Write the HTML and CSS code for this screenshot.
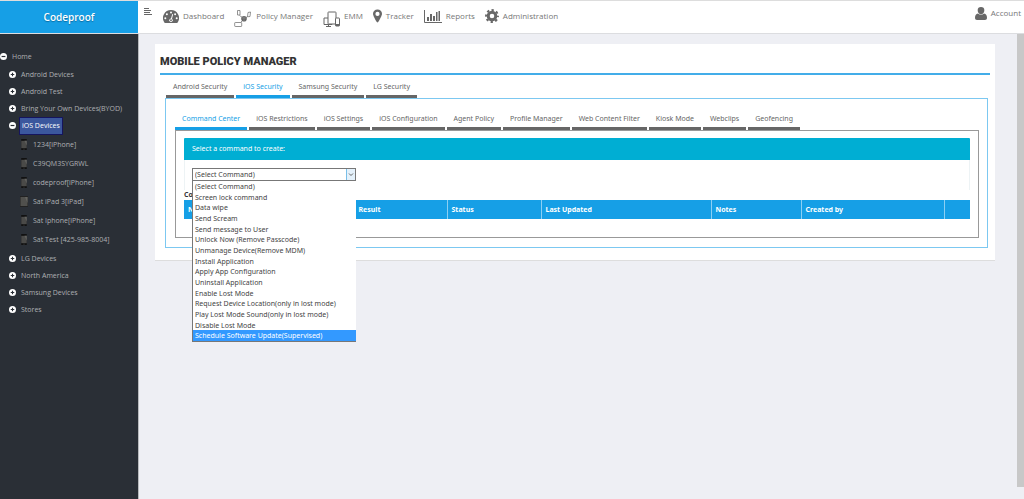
FILE: index.html
```html
<!DOCTYPE html>
<html lang="en">
<head>
<meta charset="utf-8">
<title>Codeproof</title>
<link rel="stylesheet" href="styles.css">
</head>
<body>
<svg class="defs" aria-hidden="true">
  <symbol id="plus" viewBox="0 0 14 14"><circle cx="7" cy="7" r="7" fill="#fff"/><path d="M7 3.500v7M3.500 7h7" stroke="#2a2f36" stroke-width="2.200"/></symbol>
  <symbol id="minus" viewBox="0 0 14 14"><circle cx="7" cy="7" r="7" fill="#fff"/><path d="M3.200 7h7.600" stroke="#2a2f36" stroke-width="2.400"/></symbol>
  <symbol id="phone" viewBox="0 0 6 12"><path fill="#111" d="M0 0h6v12H0z"/><path fill="#4a4a48" d="M0 2h6v8H0z"/><path fill="#62625f" d="M3.500 2H6v5z"/><path fill="#555" d="M2.500 10.700h1v.7h-1z"/></symbol>
  <symbol id="tablet" viewBox="0 0 8 11"><path fill="#222" d="M0 0h8v11H0z"/><path fill="#50504d" d="M.5 1h7v9h-7z"/><path fill="#646460" d="M5 1h2.500v6z"/></symbol>
</svg>
<header class="topbar">
  <a class="brand" href="#">Codeproof</a>
  <button class="toggle" aria-label="Toggle sidebar"><svg viewBox="0 0 8 7"><path d="M0 .5h5M0 2.500h7M0 4.500h6M0 6.500h8" stroke="#666"/></svg></button>
  <nav class="mainnav">
    <a href="#"><svg class="dash" viewBox="0 0 16 13"><path fill="#686868" d="M8 0a8 8 0 0 1 6.700 12.400l-.7.600H2l-.7-.6A8 8 0 0 1 8 0z"/><g fill="#fff"><circle cx="8" cy="2.500" r="1"/><circle cx="3.900" cy="4.200" r="1"/><circle cx="12.100" cy="4.200" r="1"/><circle cx="2.300" cy="8.200" r="1"/><circle cx="13.700" cy="8.200" r="1"/><circle cx="8" cy="10.200" r="1.700"/><path d="M9.300 4l.8.200-1.300 5.500-1.100-.3z"/></g><circle cx="8" cy="10.200" r=".9" fill="#686868"/></svg>Dashboard</a>
    <a href="#"><svg class="policy" viewBox="0 0 18 18"><g fill="#fff" stroke="#777" stroke-width=".8"><path d="M3.500 1.500H6v4.500H3.500z"/><path d="M14 3.500l2.500-.5-.5 4.500-2.500.3z"/><rect x=".7" y="13.500" width="7" height="4" rx=".6"/></g><path d="M5.500 6.500l3 2M13.500 7.500L11.500 9M7 13l2-2" stroke="#777" stroke-width=".8"/><circle cx="10" cy="9.800" r="2.800" fill="#666"/><path d="M8 9h4M10 7.500v4.500" stroke="#bbb" stroke-width=".3"/></svg>Policy Manager</a>
    <a href="#"><svg class="emm" viewBox="0 0 17 17"><g fill="#fff" stroke="#666"><path d="M1 7h8v6.500H1z"/><path d="M3 15.500h5M5.500 13.500v2"/><rect x="5" y="1" width="8" height="12" rx=".6"/><rect x="12.500" y="7" width="4" height="8" rx=".6"/></g><path d="M12.500 13h4v2h-4z" fill="#666"/></svg>EMM</a>
    <a href="#"><svg class="pin" viewBox="0 0 9 13"><path fill="#686868" fill-rule="evenodd" d="M4.500 0A4.400 4.400 0 0 1 9 4.500C9 6 6.500 10.500 5.200 12.600q-.7.800-1.400 0C2.500 10.500 0 6 0 4.500A4.400 4.400 0 0 1 4.500 0zm0 2.300a2.100 2.100 0 1 0 0 4.200 2.100 2.100 0 0 0 0-4.200z"/></svg>Tracker</a>
    <a href="#"><svg class="bars" viewBox="0 0 18 13"><path d="M.5 0v12.500H18" fill="none" stroke="#686868"/><path fill="#686868" d="M3 7h2v4H3zM6 4h2v7H6zM9 6h2v5H9zM12 2h1.500v9H12zM14.500 1H16v10h-1.500z"/></svg>Reports</a>
    <a href="#"><svg class="gear" viewBox="0 0 14 14"><circle cx="7" cy="7" r="3.800" fill="none" stroke="#686868" stroke-width="3"/><circle cx="7" cy="7" r="6" fill="none" stroke="#686868" stroke-width="1.900" stroke-dasharray="2.360 2.352" stroke-dashoffset="1.180"/></svg>Administration</a>
  </nav>
  <a class="account" href="#"><svg viewBox="0 0 12 13"><path fill="#686868" d="M6 0a3.300 3.300 0 0 1 3.300 3.500C9.300 5.500 8 7.200 6 7.200S2.700 5.500 2.700 3.500A3.300 3.300 0 0 1 6 0zM3 6.500q3 2.500 6 0c2.200.2 3 2 3 4.500 0 1.300-.8 2-2 2H2c-1.200 0-2-.7-2-2 0-2.500.8-4.300 3-4.500z"/></svg>Account</a>
</header>
<div class="body">
  <nav class="sidebar" aria-label="Devices">
    <ul class="tree">
      <li><a href="#"><svg><use href="#minus"/></svg><span>Home</span></a>
        <ul class="groups">
          <li><a href="#"><svg><use href="#plus"/></svg><span>Android Devices</span></a></li>
          <li><a href="#"><svg><use href="#plus"/></svg><span>Android Test</span></a></li>
          <li><a href="#"><svg><use href="#plus"/></svg><span>Bring Your Own Devices(BYOD)</span></a></li>
          <li><a href="#"><svg><use href="#minus"/></svg><span class="current">iOS Devices</span></a>
            <ul class="devices">
              <li><a href="#"><svg><use href="#phone"/></svg><span>1234[iPhone]</span></a></li>
              <li><a href="#"><svg><use href="#phone"/></svg><span>C39QM3SYGRWL</span></a></li>
              <li><a href="#"><svg><use href="#phone"/></svg><span>codeproof[iPhone]</span></a></li>
              <li><a href="#"><svg><use href="#tablet"/></svg><span>Sat iPad 3[iPad]</span></a></li>
              <li><a href="#"><svg><use href="#phone"/></svg><span>Sat Iphone[iPhone]</span></a></li>
              <li><a href="#"><svg><use href="#phone"/></svg><span>Sat Test [425-985-8004]</span></a></li>
            </ul>
          </li>
          <li><a href="#"><svg><use href="#plus"/></svg><span>LG Devices</span></a></li>
          <li><a href="#"><svg><use href="#plus"/></svg><span>North America</span></a></li>
          <li><a href="#"><svg><use href="#plus"/></svg><span>Samsung Devices</span></a></li>
          <li><a href="#"><svg><use href="#plus"/></svg><span>Stores</span></a></li>
        </ul>
      </li>
    </ul>
  </nav>
  <main class="content">
    <section class="card">
      <h1>MOBILE POLICY MANAGER</h1>
      <nav class="tabs">
        <a href="#">Android Security</a><a href="#" class="active">iOS Security</a><a href="#">Samsung Security</a><a href="#">LG Security</a>
      </nav>
      <div class="panel">
        <nav class="tabs">
          <a href="#" class="active">Command Center</a><a href="#">iOS Restrictions</a><a href="#">iOS Settings</a><a href="#">iOS Configuration</a><a href="#">Agent Policy</a><a href="#">Profile Manager</a><a href="#">Web Content Filter</a><a href="#">Kiosk Mode</a><a href="#">Webclips</a><a href="#">Geofencing</a>
        </nav>
        <div class="subpanel">
          <label class="prompt" for="command">Select a command to create:</label>
          <div class="create">
            <div class="picker">
              <select id="command"><option>(Select Command)</option></select>
              <svg class="arrow" viewBox="0 0 9 11" aria-hidden="true"><path d="M0 0h9v11H0z" fill="#e4f1fb"/><path d="M.5 0v11" stroke="#79bfe8"/><path d="M3 4.500l2 2 2-2" fill="none" stroke="#666"/></svg>
              <ul class="options" role="listbox" aria-label="Commands">
                <li role="option">(Select Command)</li>
                <li role="option">Screen lock command</li>
                <li role="option">Data wipe</li>
                <li role="option">Send Scream</li>
                <li role="option">Send message to User</li>
                <li role="option">Unlock Now (Remove Passcode)</li>
                <li role="option">Unmanage Device(Remove MDM)</li>
                <li role="option">Install Application</li>
                <li role="option">Apply App Configuration</li>
                <li role="option">Uninstall Application</li>
                <li role="option">Enable Lost Mode</li>
                <li role="option">Request Device Location(only in lost mode)</li>
                <li role="option">Play Lost Mode Sound(only in lost mode)</li>
                <li role="option">Disable Lost Mode</li>
                <li role="option" class="selected" aria-selected="true">Schedule Software Update(Supervised)</li>
              </ul>
            </div>
          </div>
          <h2>Co</h2>
          <table>
            <colgroup><col><col class="c-result"><col class="c-status"><col class="c-updated"><col class="c-notes"><col class="c-created"><col class="c-action"></colgroup>
            <thead><tr><th>N</th><th>Result</th><th>Status</th><th>Last Updated</th><th>Notes</th><th>Created by</th><th></th></tr></thead>
          </table>
        </div>
      </div>
    </section>
  </main>
  <div class="scrollbar"></div>
</div>
</body>
</html>
```
FILE: styles.css
```css
* { box-sizing: border-box; }
body {
  margin: 0;
  min-height: 100vh;
  display: flex;
  flex-direction: column;
  background: #eeeff4;
  color: #666;
  font: 7px/10px "Open Sans", sans-serif;
}
a { color: inherit; text-decoration: none; }
ul { list-style: none; margin: 0; padding: 0; }
svg { flex: none; display: block; }
.defs { display: none; }

.topbar {
  display: flex;
  height: 34px;
  background: #fff;
  border-top: 1px solid #ddd;
  border-bottom: 1px solid #dcdde0;
  color: #777;
  font-size: 8px;
}
.brand {
  width: 138px;
  display: grid;
  place-items: center;
  background: #169fe6;
  color: #fff;
  font-size: 10px;
  font-weight: 600;
  text-shadow: 0 1px 1px #0a6ea5;
}
.toggle {
  align-self: flex-start;
  margin: 7px 0 0 6px;
  padding: 0;
  border: 0;
  background: none;
}
.toggle svg { width: 8px; height: 7px; }
.mainnav { display: flex; gap: 10px; margin-left: 11px; height: 30px; }
.mainnav a { display: flex; align-items: center; gap: 4px; }
.dash { width: 16px; height: 13px; }
.policy { width: 18px; height: 18px; margin-top: 4px; }
.emm { width: 17px; height: 17px; margin-top: 6px; }
.pin { width: 9px; height: 14px; }
.bars { width: 18px; height: 13px; }
.gear { width: 14px; height: 14px; }
.account {
  margin: 0 3px 0 auto;
  height: 24px;
  display: flex;
  align-items: center;
  gap: 4px;
}
.account svg { width: 12px; height: 13px; }

.body { flex: 1; display: flex; }
.sidebar {
  width: 139px;
  flex: none;
  padding-top: 14px;
  background: #2a2f36;
  border-right: 1px solid #b8babd;
  color: #aeb0b3;
}
.tree a { display: flex; align-items: center; gap: 5px; height: 17px; white-space: nowrap; }
.tree svg { width: 7px; height: 7px; }
.groups { padding-top: 1px; }
.groups a { padding-left: 9px; }
.current {
  margin-left: -2px;
  padding: 3px 2px;
  background: #3b579d;
  border: 1px solid #15155e;
  color: #fff;
}
.devices { padding: 1px 0; }
.groups .devices a { height: 19px; padding-left: 20px; }
.tree .devices svg { width: 8px; height: 11px; }

.content { flex: 1; min-width: 0; padding: 10px 22px 0 16px; }
.card {
  background: #fff;
  padding: 10px 5px 12px;
  border-bottom: 1px solid #ddd;
  font-family: "Noto Sans", "Open Sans", sans-serif;
}
h1 {
  margin: 0;
  padding-bottom: 4px;
  border-bottom: 2px solid #43ade9;
  color: #333;
  font: 900 11px/15px Roboto, sans-serif;
}
.tabs { display: flex; gap: 2px; }
.card > .tabs { padding: 5px 0 0 6px; }
.tabs a {
  padding: 2px 7px 3px;
  border-bottom: 3px solid #666;
  white-space: nowrap;
}
.tabs .active { color: #169fe6; border-color: #169fe6; }
.panel {
  margin: 0 2px 0 5px;
  padding: 13px 8px 9px 9px;
  border: 1px solid #7cc8f1;
}
.subpanel {
  padding: 7px 8px 18px;
  border: 1px solid #999;
}
.prompt {
  display: block;
  padding: 6px 8px;
  background: #00aed3;
  color: #fff;
  border-radius: 1px 1px 0 0;
}
.create {
  padding: 8px 8px 9px 7px;
  border: 1px solid #edf3f5;
  border-width: 0 1px;
}
.picker { position: relative; width: 164px; }
select {
  display: block;
  appearance: none;
  width: 100%;
  height: 13px;
  padding: 0 2px;
  border: 1px solid #777;
  border-radius: 0;
  background: #fff;
  color: #444;
  font: inherit;
}
.arrow { position: absolute; right: 1px; top: 1px; width: 9px; height: 11px; }
.options {
  position: absolute;
  z-index: 1;
  top: 100%;
  left: 0;
  width: 100%;
  height: 161px;
  display: grid;
  grid-auto-rows: minmax(0, 1fr);
  background: #fff;
  border-left: 1px solid #777;
  border-bottom: 1px solid #777;
  color: #444;
  line-height: 11px;
}
.options li { padding-left: 2px; white-space: nowrap; }
.options .selected { background: #3399ff; color: #fff; }
h2 { margin: 0; font: bold 7px/10px "Open Sans", sans-serif; color: #333; }
table {
  width: 100%;
  table-layout: fixed;
  border-collapse: collapse;
  background: #169fe6;
  color: #fff;
}
th {
  height: 19px;
  padding: 0 4px;
  text-align: left;
  font-weight: 700;
  border-right: 1px solid #8ccff3;
}
th:last-child { border-right: 0; }
.c-result { width: 93px; }
.c-status { width: 94px; }
.c-updated { width: 170px; }
.c-notes { width: 90px; }
.c-created { width: 143px; }
.c-action { width: 26px; }
.scrollbar { width: 7px; margin-bottom: 12px; background: #c8c8c8; }
```
